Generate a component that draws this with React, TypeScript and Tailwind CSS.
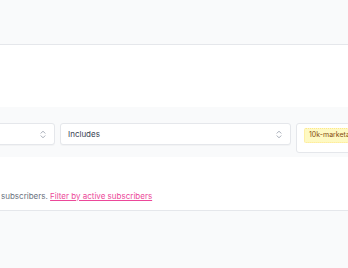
import React from "react";

function Chevron() {
  return (
    <svg width="6" height="9" viewBox="0 0 6 9" fill="none" stroke="#9ca3af" strokeWidth="0.9" strokeLinecap="round" strokeLinejoin="round">
      <path d="M1 3.2 L3 1.2 L5 3.2" />
      <path d="M1 5.8 L3 7.8 L5 5.8" />
    </svg>
  );
}

export default function App() {
  return (
    <div className="w-[348px] h-[268px] overflow-hidden bg-white" style={{ fontFamily: "Inter, 'Noto Sans', sans-serif" }}>
      <div className="h-[45px] bg-[#f9fafb] border-b border-[#e5e7eb]" />
      <div className="h-[62px] bg-white" />
      <div className="h-[50px] bg-[#f9fafb] pt-[16px]">
        <div className="flex items-start gap-[5px] ml-[-100px]">
          <div className="w-[155px] h-[22px] shrink-0 bg-white border border-[#e5e7eb] rounded-[3px] shadow-[0_1px_1px_rgba(0,0,0,0.03)] flex items-center justify-end pr-[8px]">
            <Chevron />
          </div>
          <div className="w-[231px] h-[22px] shrink-0 bg-white border border-[#e5e7eb] rounded-[3px] shadow-[0_1px_1px_rgba(0,0,0,0.03)] flex items-center justify-between pl-[7px] pr-[8px]">
            <span className="text-[8px] text-[#374151]">Includes</span>
            <Chevron />
          </div>
          <div className="w-[120px] h-[30px] shrink-0 bg-white border border-[#e5e7eb] rounded-[3px] pl-[7px] pt-[4px] flex items-start">
            <span className="flex items-center h-[15px] px-[4px] bg-[#fef9c3] border border-dotted border-[#fde68a] rounded-[2px] text-[7px] text-[#854d0e] whitespace-nowrap">10k-marketable</span>
          </div>
        </div>
      </div>
      <div className="h-[53px] bg-white pt-[34px] pl-[1px]">
        <p className="text-[8px] leading-[10px] text-[#6b7280] whitespace-nowrap">
          subscribers.{" "}
          <a className="text-[#ec4899] underline">Filter by active subscribers</a>
        </p>
      </div>
      <div className="h-[58px] bg-[#f9fafb] border-t border-[#e5e7eb]" />
    </div>
  );
}
